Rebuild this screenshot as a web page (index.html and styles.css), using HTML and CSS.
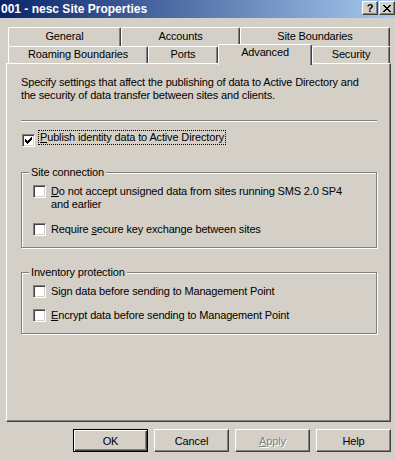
FILE: index.html
```html
<!DOCTYPE html>
<html lang="en">

<head>
    <meta charset="UTF-8">
    <title>001 - nesc Site Properties</title>
    <link rel="stylesheet" href="styles.css">
</head>

<body>
    <div class="titlebar">
        <span class="title">001 - nesc Site Properties</span>
        <div class="caption-btns">
            <span class="cbtn help">?</span>
            <span class="cbtn">
                <svg width="8" height="7" viewBox="0 0 8 7" shape-rendering="crispEdges">
                    <path d="M0 0h2v1h-2z M6 0h2v1h-2z M1 1h2v1h-2z M5 1h2v1h-2z M2 2h4v1h-4z M3 3h2v1h-2z M2 4h4v1h-4z M1 5h2v1h-2z M5 5h2v1h-2z M0 6h2v1h-2z M6 6h2v1h-2z" fill="#000" />
                </svg>
            </span>
        </div>
    </div>

    <div class="dialog">
        <div class="tabs">
            <div class="tab-row back">
                <div class="tab" style="width: 113px">General</div>
                <div class="tab" style="width: 119px">Accounts</div>
                <div class="tab" style="width: 150px">Site Boundaries</div>
            </div>
            <div class="tab-row front">
                <div class="tab" style="width: 140px">Roaming Boundaries</div>
                <div class="tab" style="width: 70px">Ports</div>
                <div class="tab active" style="width: 94px">Advanced</div>
                <div class="tab" style="width: 78px">Security</div>
            </div>
        </div>

        <div class="panel">
            <p class="desc">Specify settings that affect the publishing of data to Active Directory and<br>the security of data transfer between sites and clients.</p>
            <div class="separator"></div>

            <div class="opt publish">
                <span class="check checked">
                    <svg width="7" height="7" viewBox="0 0 7 7" shape-rendering="crispEdges">
                        <path d="M6 0h1v1h-1z M5 1h2v1h-2z M0 2h1v1h-1z M4 2h3v1h-3z M0 3h2v1h-2z M3 3h3v1h-3z M0 4h5v1h-5z M1 5h3v1h-3z M2 6h1v1h-1z" fill="#000" />
                    </svg>
                </span>
                <span class="label focus"><u>P</u>ublish identity data to Active Directory</span>
            </div>

            <div class="group first">
                <div class="group-title">Site connection</div>
                <div class="opt">
                    <span class="check"></span>
                    <span class="label"><u>D</u>o not accept unsigned data from sites running SMS 2.0 SP4<br>and earlier</span>
                </div>
                <div class="opt">
                    <span class="check"></span>
                    <span class="label">Require <u>s</u>ecure key exchange between sites</span>
                </div>
            </div>

            <div class="group">
                <div class="group-title">Inventory protection</div>
                <div class="opt">
                    <span class="check"></span>
                    <span class="label">Si<u>g</u>n data before sending to Management Point</span>
                </div>
                <div class="opt">
                    <span class="check"></span>
                    <span class="label"><u>E</u>ncrypt data before sending to Management Point</span>
                </div>
            </div>
        </div>

        <div class="buttons">
            <button class="btn default">OK</button>
            <button class="btn">Cancel</button>
            <button class="btn" disabled><u>A</u>pply</button>
            <button class="btn">Help</button>
        </div>
    </div>
</body>

</html>
```

FILE: styles.css
```css
body {
    margin: 0;
    padding: 0;
    background-color: #d4d0c8;
    font-family: "Liberation Sans", Arial, sans-serif;
    font-size: 11px;
    line-height: 13px;
    letter-spacing: -0.15px;
    color: #000;
}

.titlebar {
    height: 18px;
    display: flex;
    align-items: center;
    justify-content: space-between;
    background: linear-gradient(to right, #0a246a, #a6caf0);
}

.title {
    padding-left: 1px;
    color: #fff;
    font-weight: bold;
    font-size: 12px;
    letter-spacing: 0;
}

.caption-btns {
    display: flex;
    gap: 1px;
    align-self: flex-start;
    margin-top: 1px;
}

.cbtn {
    width: 16px;
    height: 14px;
    box-sizing: border-box;
    display: flex;
    align-items: center;
    justify-content: center;
    background-color: #d4d0c8;
    border: 1px solid;
    border-color: #fff #404040 #404040 #fff;
    box-shadow: inset -1px -1px #808080;
}

.cbtn.help {
    font-weight: bold;
    font-size: 11px;
    line-height: 11px;
}

.dialog {
    padding: 9px 4px 0 6px;
}

.tabs {
    margin-left: 2px;
}

.tab-row {
    display: flex;
}

.tab-row.back {
    height: 19px;
}

.tab-row.front {
    height: 17px;
    align-items: flex-start;
}

.tab {
    box-sizing: border-box;
    height: 19px;
    padding-top: 2px;
    text-align: center;
    background-color: #d4d0c8;
    border-top: 1px solid #fff;
    border-left: 1px solid #fff;
    border-right: 1px solid #404040;
    border-radius: 2px 2px 0 0;
    box-shadow: inset -1px 0 #808080;
}

.tab-row.front .tab {
    height: 17px;
    padding-top: 1px;
}

.tab-row.front .tab.active {
    position: relative;
    z-index: 1;
    height: 21px;
    margin-top: -2px;
}

.panel {
    box-sizing: border-box;
    height: 359px;
    padding: 12px 13px 0 14px;
    border: 1px solid;
    border-color: #fff #404040 #404040 #fff;
    box-shadow: inset -1px -1px #808080;
}

.desc {
    margin: 0;
}

.separator {
    margin-top: 18px;
    border-top: 1px solid #808080;
    border-bottom: 1px solid #fff;
}

.opt {
    display: flex;
    align-items: flex-start;
    gap: 5px;
}

.check {
    flex: none;
    box-sizing: border-box;
    width: 13px;
    height: 13px;
    display: flex;
    align-items: center;
    justify-content: center;
    background-color: #fff;
    border: 1px solid;
    border-color: #808080 #fff #fff #808080;
    box-shadow: inset 1px 1px #404040, inset -1px -1px #d4d0c8;
}

.opt.publish {
    margin-top: 8px;
    gap: 3px;
}

.opt.publish .check {
    margin: 4px 0 0 1px;
}

.label.focus {
    padding: 0 1px;
    border: 1px dotted #000;
}

.group {
    margin-top: 24px;
    padding: 0 11px 11px;
    border: 1px solid #808080;
    box-shadow: inset 1px 1px #fff, 1px 1px #fff;
}

.group.first {
    margin-top: 25px;
    padding-bottom: 11px;
}

.group-title {
    width: fit-content;
    margin: -7px 0 6px -4px;
    padding: 0 2px;
    background-color: #d4d0c8;
}

.group .opt + .opt {
    margin-top: 11px;
}

.group.first .opt + .opt {
    margin-top: 12px;
}

.buttons {
    display: flex;
    justify-content: flex-end;
    gap: 6px;
    margin-top: 7px;
}

.btn {
    box-sizing: border-box;
    width: 75px;
    height: 23px;
    padding: 0;
    font-family: inherit;
    font-size: 11px;
    letter-spacing: -0.15px;
    color: #000;
    background-color: #d4d0c8;
    border: 1px solid;
    border-color: #fff #404040 #404040 #fff;
    box-shadow: inset -1px -1px #808080;
}

.btn.default {
    border: 1px solid #000;
    box-shadow: inset 1px 1px #fff, inset -1px -1px #404040, inset -2px -2px #808080;
}

.btn:disabled {
    color: #808080;
    text-shadow: 1px 1px #fff;
}
```
